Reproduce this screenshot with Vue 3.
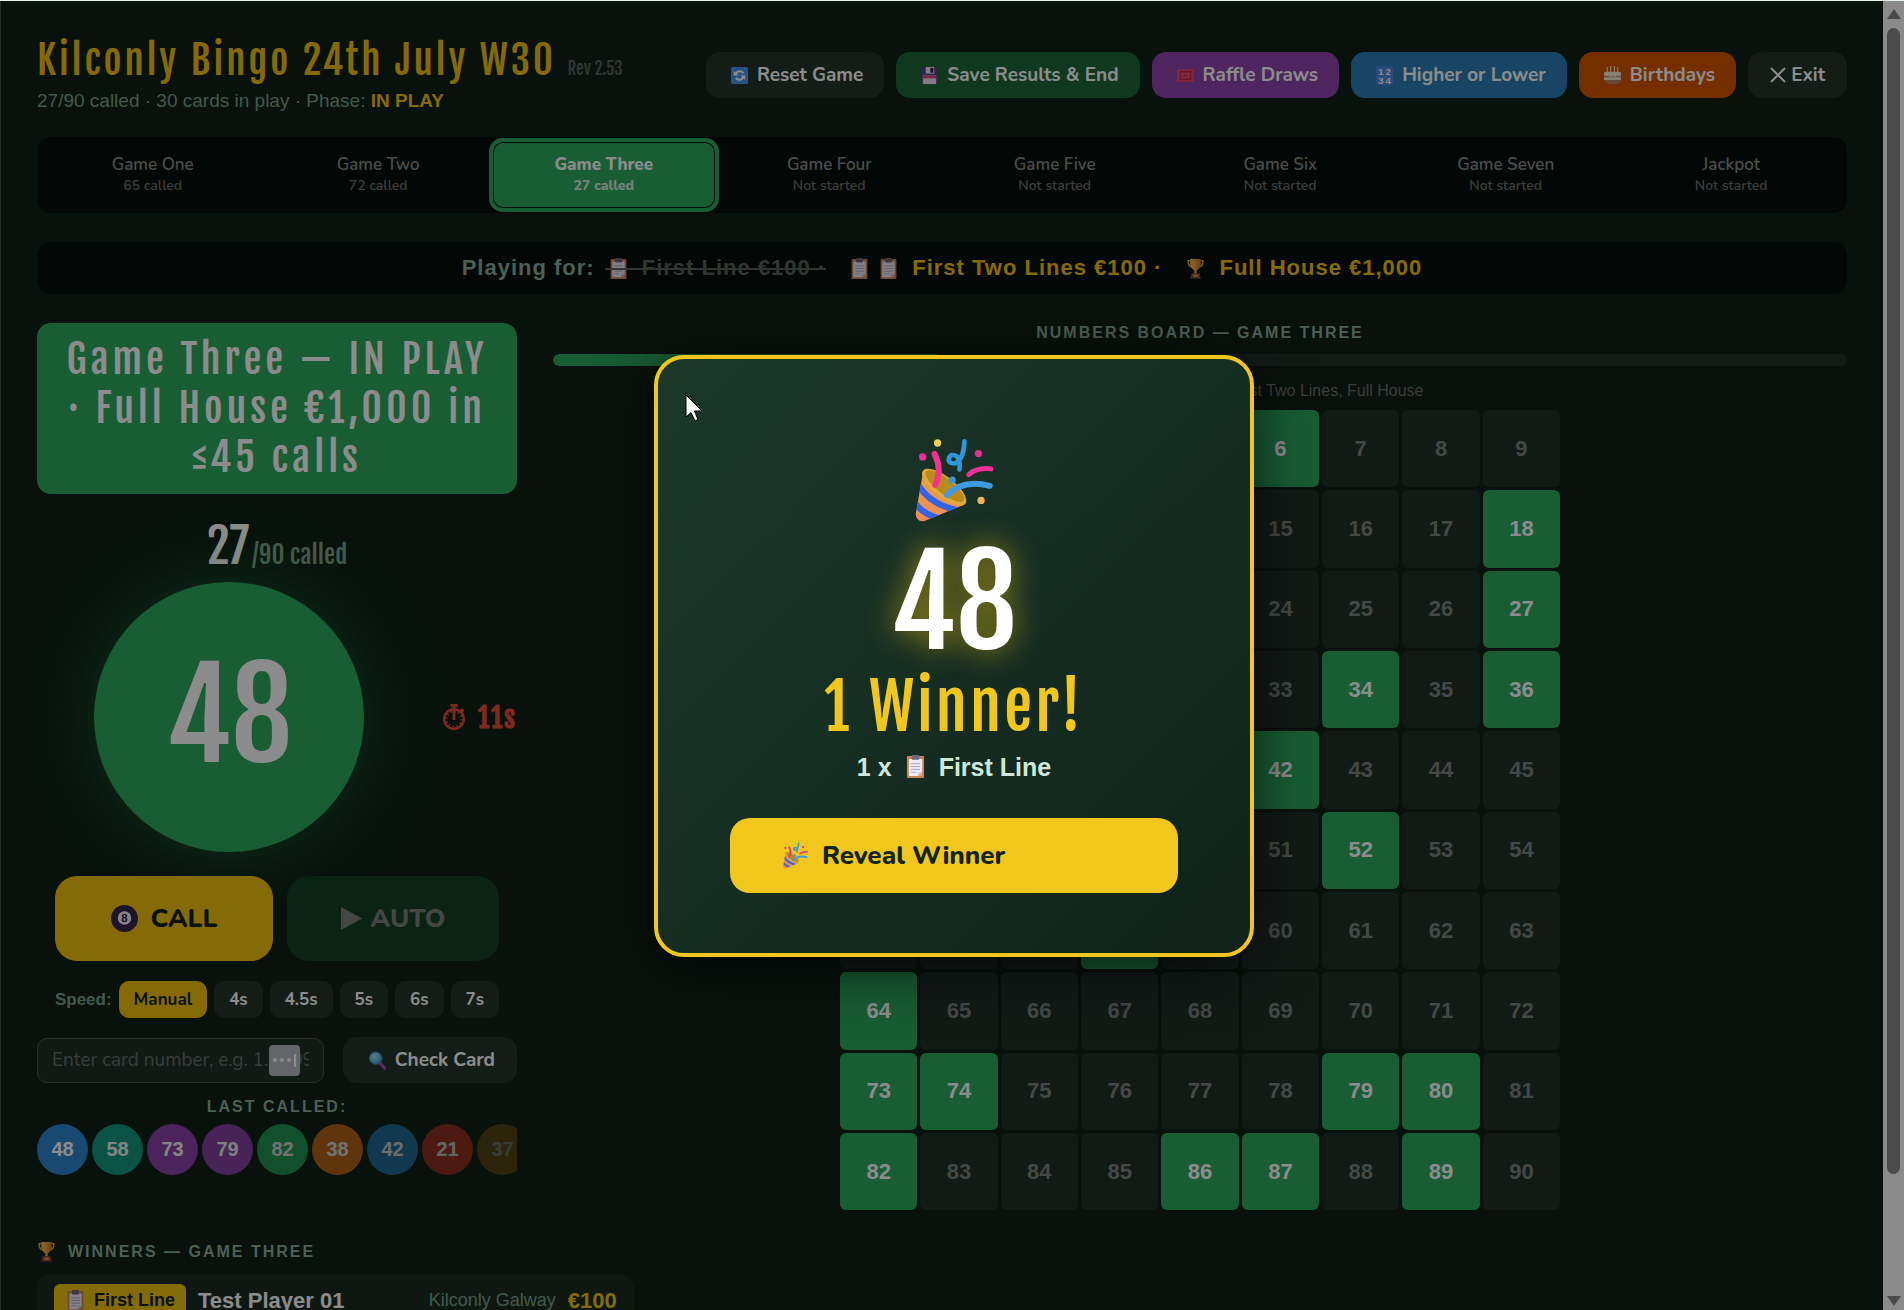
<template>
  <div class="screen">
    <svg class="defs" aria-hidden="true">
      <defs>
        <linearGradient id="cone" x1="0" y1="0" x2="0" y2="1">
          <stop offset="0" stop-color="#dfa43c" />
          <stop offset="1" stop-color="#f08a5d" />
        </linearGradient>
        <linearGradient id="gold" x1="0" y1="0" x2="1" y2="0">
          <stop offset="0" stop-color="#f7c557" />
          <stop offset="1" stop-color="#c97a1a" />
        </linearGradient>
        <radialGradient id="lens" cx="0.4" cy="0.35" r="0.7">
          <stop offset="0" stop-color="#a8e4f7" />
          <stop offset="1" stop-color="#3fa6d4" />
        </radialGradient>
        <clipPath id="coneClip">
          <path d="M94 152 L71 284 Q73 308 98 304 L219 254 Q160 245 94 152Z" />
        </clipPath>
      </defs>
      <symbol id="i-popper" viewBox="66 54 244 256">
        <path d="M94 152 L71 284 Q73 308 98 304 L219 254 Q160 245 94 152Z" fill="url(#cone)" />
        <g clip-path="url(#coneClip)" fill="none" stroke="#3563e8" stroke-width="19">
          <path d="M74 186 Q108 254 200 272" />
          <path d="M62 240 Q88 284 150 298" />
        </g>
        <ellipse cx="157" cy="202" rx="81" ry="31" transform="rotate(38 157 202)" fill="#e5a93a" />
        <ellipse cx="159" cy="199" rx="72" ry="23" transform="rotate(38 159 199)" fill="#b98a1c" />
        <g fill="none" stroke-linecap="round" stroke-linejoin="round">
          <path d="M128 102 Q152 150 130 196" stroke="#f5318f" stroke-width="18" />
          <path d="M166 226 Q212 178 294 198" stroke="#3f9be0" stroke-width="18" />
          <path d="M231 164 Q256 142 298 147" stroke="#ee2f97" stroke-width="15" />
          <path d="M218 64 Q216 116 192 130 Q168 132 171 116 Q178 98 196 110 Q206 124 203 149" stroke="#3097db" stroke-width="14" />
        </g>
        <circle cx="137" cy="69" r="11" fill="#f3cf55" />
        <circle cx="92" cy="111" r="11" fill="#ee2f97" />
        <circle cx="260" cy="101" r="11" fill="#e03290" />
        <circle cx="181" cy="181" r="11" fill="#3f93cf" />
        <circle cx="268" cy="242" r="11" fill="#f2b354" />
      </symbol>
      <symbol id="i-clip" viewBox="0 0 20 24">
        <rect x="1" y="1" width="18" height="23" rx="1" fill="#c98358" />
        <path d="M3 4h14v14l-4 4H3z" fill="#f1eaf6" />
        <path d="M17 17.500v4.500h-5z" fill="#e3a878" />
        <path d="M13 22v-4h4z" fill="#cfc3dc" />
        <rect x="6" y="0" width="8" height="5" rx="1" fill="#6c6679" />
        <path d="M5 9h10M5 12h10M5 15h10M5 18h6" stroke="#a79fb8" />
      </symbol>
      <symbol id="i-trophy" viewBox="0 0 20 24">
        <path d="M4 3H1.500c0 5 1.500 7 5 7M16 3h2.500c0 5-1.500 7-5 7" fill="none" stroke="#e8a93a" stroke-width="1.600" />
        <path d="M4 1h12v5c0 5-3 7-4.500 8v4h-3v-4C7 13 4 11 4 6z" fill="url(#gold)" />
        <path d="M4 23.500l1.500-6h9l1.500 6z" fill="#8a4a4a" />
        <rect x="7.500" y="19" width="5" height="2.500" fill="#e8a93a" />
      </symbol>
      <symbol id="i-reset" viewBox="0 0 20 20">
        <rect x="1" y="1" width="18" height="18" rx="2" fill="#4a95ee" />
        <path d="M6 8.500a4.500 4.500 0 0 1 8-1M14 11.500a4.500 4.500 0 0 1-8 1" fill="none" stroke="#fff" stroke-width="2" />
        <path d="M4 5v5h5zM16 15v-5h-5z" fill="#fff" />
      </symbol>
      <symbol id="i-save" viewBox="0 0 20 20">
        <path d="M1 1h15l3 3v15H1z" fill="#5b3f86" />
        <rect x="6" y="1" width="9" height="7" fill="#e9e3f2" />
        <rect x="11" y="2" width="3" height="5" fill="#2c2340" />
        <rect x="3" y="10" width="14" height="9" fill="#f2dfe9" />
        <rect x="3" y="10" width="14" height="3" fill="#d8477f" />
      </symbol>
      <symbol id="i-ticket" viewBox="0 0 20 20">
        <path d="M1 4.500Q0 4 2 3.500h16q2 .5 1 1.500v2.500q-2 1 0 2v1.500q-2 1 0 2v2q.5 1.500-1 1.500H2q-2 0-1-2z" fill="#f04468" />
        <rect x="4.500" y="6" width="11" height="8" fill="none" stroke="#c02c4c" stroke-width="1.500" />
        <path d="M8 10h4" stroke="#c02c4c" stroke-width="1.500" />
      </symbol>
      <symbol id="i-digits" viewBox="0 0 20 20">
        <rect x="1" y="0" width="18" height="20" rx="2" fill="#4f86e0" />
        <g fill="#fff" font-family="Liberation Sans, sans-serif" font-weight="700" font-size="10">
          <text x="3.500" y="9">1</text><text x="11" y="9">2</text>
          <text x="3.500" y="18.500">3</text><text x="11" y="18.500">4</text>
        </g>
      </symbol>
      <symbol id="i-cake" viewBox="0 0 20 20">
        <path d="M4.500 1v6M8 0v6M12 0v6M15.500 1v6" stroke="#f3e3b0" stroke-width="1.200" />
        <rect x="1" y="6" width="18" height="6" rx="2" fill="#f5ead8" />
        <path d="M1 9q2 3 4.500 1 2.500 3 5 0 2 3 4.500 0 2 2 4-1v3H1z" fill="#c79a72" />
        <rect x="1" y="12" width="18" height="3" fill="#f5ead8" />
        <path d="M2 15h16v3q-8 3-16 0z" fill="#b98463" />
      </symbol>
      <symbol id="i-ball" viewBox="0 0 26 26">
        <circle cx="13" cy="13" r="13" fill="#35234f" />
        <circle cx="13" cy="12.500" r="6.500" fill="#f4f0fa" />
        <text x="13" y="16.500" text-anchor="middle" fill="#241a3a" font-family="Liberation Sans, sans-serif" font-weight="700" font-size="11">8</text>
      </symbol>
      <symbol id="i-lens" viewBox="0 0 20 20">
        <path d="M12 12l5.500 6" stroke="#9b4fb0" stroke-width="3.500" stroke-linecap="round" />
        <circle cx="8" cy="7.500" r="7" fill="#4a8fb5" />
        <circle cx="8" cy="7.500" r="5.800" fill="url(#lens)" />
      </symbol>
      <symbol id="i-watch" viewBox="0 0 24 28">
        <circle cx="12" cy="16" r="9.800" fill="none" stroke="currentColor" stroke-width="2.400" />
        <circle cx="12" cy="16" r="7.600" fill="none" stroke="currentColor" stroke-width="1.800" stroke-dasharray="1.500 2.480" />
        <path d="M12 17V6M8.500 2.500h7M12 2v4M19 6l2.500 2.500" stroke="currentColor" stroke-width="2.800" fill="none" />
      </symbol>
    </svg>

    <main class="page">
      <header class="header">
        <div>
          <h1>Kilconly Bingo 24th July W30 <small>Rev 2.53</small></h1>
          <p class="sub">27/90 called · 30 cards in play · Phase: <strong>IN PLAY</strong></p>
        </div>
        <div class="actions">
          <button v-for="a in actions" :key="a.label" type="button" class="btn" :class="a.kind">
            <svg v-if="a.icon" class="emo"><use :href="'#i-' + a.icon" /></svg>
            <svg v-else class="cross" viewBox="0 0 16 16"><path d="M1 1l14 14M15 1L1 15" /></svg>
            {{ a.label }}
          </button>
        </div>
      </header>

      <nav class="tabs">
        <button v-for="g in games" :key="g.name" type="button" class="tab" :class="{ active: g.active }">
          <span class="tab-name">{{ g.name }}</span>
          <span class="tab-sub">{{ g.note }}</span>
        </button>
      </nav>

      <div class="prizes">
        <span class="prizes-label">Playing for:</span>
        <span class="prize done"><svg class="emo"><use href="#i-clip" /></svg>First Line €100 ·</span>
        <span class="prize">
          <svg class="emo tight"><use href="#i-clip" /></svg><svg class="emo"><use href="#i-clip" /></svg>First Two Lines €100 ·
        </span>
        <span class="prize"><svg class="emo"><use href="#i-trophy" /></svg>Full House €1,000</span>
      </div>

      <div class="columns">
        <section class="caller">
          <div class="banner">Game Three — IN PLAY · Full House €1,000 in ≤45 calls</div>
          <div class="count">27<span>/90 called</span></div>
          <div class="stage">
            <div class="stage-ball"><div class="ball-big">48</div></div>
            <div class="timer"><svg><use href="#i-watch" /></svg>11s</div>
          </div>
          <div class="call-row">
            <button type="button" class="call"><svg><use href="#i-ball" /></svg>CALL</button>
            <button type="button" class="auto" disabled>
              <svg viewBox="0 0 22 24"><path d="M0 0L22 12L0 24Z" fill="currentColor" /></svg>AUTO
            </button>
          </div>
          <div class="speed">
            <span class="speed-label">Speed:</span>
            <button v-for="s in speeds" :key="s" type="button" :class="{ on: s === speed }" @click="speed = s">{{ s }}</button>
          </div>
          <div class="check">
            <div class="field">
              <input v-model="card" type="text" aria-label="Card number" placeholder="Enter card number, e.g. 1.2309">
              <span class="fill-hint"><i></i><i></i><i></i><b></b></span>
            </div>
            <button type="button" class="btn grey"><svg class="emo"><use href="#i-lens" /></svg>Check Card</button>
          </div>
          <h2 class="last-title">LAST CALLED:</h2>
          <div class="last">
            <span v-for="b in last" :key="b.n" class="ball" :style="{ background: b.color, opacity: b.fade }">{{ b.n }}</span>
          </div>
        </section>

        <section class="board">
          <h2>NUMBERS BOARD — GAME THREE</h2>
          <div class="progress"><div class="progress-fill" :style="{ width: percent + '%' }"></div></div>
          <p class="board-note">Prizes still left to be won this game: First Two Lines, Full House</p>
          <div class="grid">
            <div v-for="n in 90" :key="n" class="cell" :class="{ hit: called.includes(n) }">{{ n }}</div>
          </div>
        </section>
      </div>

      <section class="winners">
        <h2><svg class="emo"><use href="#i-trophy" /></svg>WINNERS — GAME THREE</h2>
        <div class="winner-list">
          <div class="winner">
            <span class="badge"><svg class="emo"><use href="#i-clip" /></svg>First Line</span>
            <span class="winner-name">Test Player 01</span>
            <span class="winner-place">Kilconly Galway</span>
            <span class="winner-sum">€100</span>
          </div>
        </div>
      </section>
    </main>

    <div class="scrollbar">
      <svg viewBox="0 0 14 10"><path d="M7 0L14 10H0Z" /></svg>
      <div class="thumb"></div>
      <svg viewBox="0 0 14 10"><path d="M0 0H14L7 10Z" /></svg>
    </div>

    <div class="overlay">
      <div class="modal" role="dialog" aria-label="Winner">
        <svg class="modal-icon"><use href="#i-popper" /></svg>
        <div class="modal-number">48</div>
        <div class="modal-title">1 Winner!</div>
        <div class="modal-sub">1 x <svg class="emo"><use href="#i-clip" /></svg>First Line</div>
        <button type="button" class="reveal"><svg><use href="#i-popper" /></svg>Reveal Winner</button>
      </div>
    </div>

    <svg class="cursor" viewBox="0 0 18 28"><path d="M1 1V23L6 18.500L10 27L13 25.500L9.500 17H17Z" /></svg>
  </div>
</template>

<script setup>
import { ref, computed } from 'vue'

const actions = [
  { label: 'Reset Game', icon: 'reset', kind: 'grey' },
  { label: 'Save Results & End', icon: 'save', kind: 'green' },
  { label: 'Raffle Draws', icon: 'ticket', kind: 'purple' },
  { label: 'Higher or Lower', icon: 'digits', kind: 'blue' },
  { label: 'Birthdays', icon: 'cake', kind: 'orange' },
  { label: 'Exit', icon: '', kind: 'grey exit' }
]

const games = [
  { name: 'Game One', note: '65 called' },
  { name: 'Game Two', note: '72 called' },
  { name: 'Game Three', note: '27 called', active: true },
  { name: 'Game Four', note: 'Not started' },
  { name: 'Game Five', note: 'Not started' },
  { name: 'Game Six', note: 'Not started' },
  { name: 'Game Seven', note: 'Not started' },
  { name: 'Jackpot', note: 'Not started' }
]

const speeds = ['Manual', '4s', '4.5s', '5s', '6s', '7s']
const speed = ref('Manual')
const card = ref('')

const last = [
  { n: 48, color: '#2f86cc', fade: 1 },
  { n: 58, color: '#16a085', fade: 0.95 },
  { n: 73, color: '#8e44ad', fade: 0.95 },
  { n: 79, color: '#8e44ad', fade: 0.9 },
  { n: 82, color: '#27ae60', fade: 0.8 },
  { n: 38, color: '#d9731a', fade: 0.8 },
  { n: 42, color: '#2980b9', fade: 0.75 },
  { n: 21, color: '#c0392b', fade: 0.7 },
  { n: 37, color: '#c98a12', fade: 0.35 }
]

const called = [
  3, 6, 11, 18, 20, 21, 27, 29, 34, 36, 37, 38, 42, 46, 48, 50, 52,
  58, 64, 73, 74, 79, 80, 82, 86, 87, 89
]
const percent = computed(() => called.length / 90 * 100)
</script>

<style>
body {
  margin: 0;
  background: #0f1f16;
}
</style>

<style scoped>
.screen {
  box-sizing: border-box;
  height: 100vh;
  overflow: hidden;
  position: relative;
  display: flex;
  border-top: 1px solid #e8f3ec;
  background: #0f1f16;
  color: #fff;
  font-family: 'Liberation Sans', Arial, sans-serif;
}

.defs {
  position: absolute;
  width: 0;
  height: 0;
}

.page {
  flex: 1;
  min-width: 0;
  padding: 36px 36px 0;
  border-left: 1px solid #4a534e;
}

h1, h2, p {
  margin: 0;
}

h2 {
  font-size: 16px;
  line-height: 20px;
  letter-spacing: 2px;
  color: #8ab09c;
}

button {
  font-family: 'Nunito', 'Open Sans', sans-serif;
  border: 0;
  color: #fff;
  cursor: pointer;
}

.emo {
  width: 19px;
  height: 21px;
  flex: none;
}

.header {
  display: flex;
  justify-content: space-between;
  align-items: center;
}

h1 {
  font-family: 'Fjalla One', 'Roboto Condensed', sans-serif;
  font-weight: 400;
  font-size: 39px;
  line-height: 48px;
  letter-spacing: 3px;
  color: #f1c40f;
}

h1 small {
  font-size: 17px;
  line-height: 20px;
  letter-spacing: 0;
  color: #59625d;
}

.sub {
  margin-top: 4px;
  font-size: 19px;
  line-height: 24px;
  color: #7aa38c;
}

.sub strong {
  color: #f1c40f;
}

.actions {
  display: flex;
  gap: 12px;
}

.btn {
  display: flex;
  align-items: center;
  gap: 8px;
  height: 46px;
  padding: 0 21px 0 24px;
  border-radius: 14px;
  font-size: 19px;
  font-weight: 700;
}

.grey { background: rgba(255, 255, 255, 0.09); }
.green { background: #1d663a; }
.purple { background: #8e44ad; }
.blue { background: #2d7fb9; }
.orange { background: #d35400; }

.exit {
  gap: 5px;
  padding: 0 22px;
}

.cross {
  width: 16px;
  height: 16px;
  fill: none;
  stroke: #fff;
  stroke-width: 2;
}

.tabs {
  display: flex;
  gap: 4px;
  margin-top: 24px;
  padding: 5px;
  border-radius: 14px;
  background: rgba(0, 0, 0, 0.5);
}

.tab {
  flex: 1;
  display: flex;
  flex-direction: column;
  align-items: center;
  justify-content: center;
  height: 66px;
  padding: 0;
  border-radius: 10px;
  background: none;
  font-weight: 600;
  color: #878c89;
}

.tab-name {
  font-size: 17px;
  line-height: 22px;
}

.tab-sub {
  font-size: 14px;
  line-height: 20px;
  opacity: 0.8;
}

.tab.active {
  background: #2da95f;
  color: #fff;
  font-weight: 800;
  box-shadow: 0 0 0 4px #2da95f, inset 0 0 0 1px #06120b;
}

.prizes {
  display: flex;
  align-items: center;
  justify-content: center;
  height: 52px;
  margin-top: 29px;
  border-radius: 14px;
  background: rgba(0, 0, 0, 0.5);
  font-size: 22px;
  font-weight: 700;
  letter-spacing: 1px;
  color: #f1c40f;
}

.prizes-label {
  margin-right: 14px;
  color: #8ab09c;
}

.prize {
  display: flex;
  align-items: center;
  margin-right: 24px;
}

.prize:last-child {
  margin-right: 0;
}

.prize .emo {
  margin-right: 14px;
}

.prize .tight {
  margin-right: 10px;
}

.prize.done {
  position: relative;
  color: #59635d;
}

.prize.done::after {
  content: '';
  position: absolute;
  left: -4px;
  right: 0;
  top: 50%;
  height: 2px;
  background: #59635d;
}

.columns {
  display: flex;
  gap: 36px;
  margin-top: 29px;
}

.caller {
  flex: 0 0 480px;
  min-width: 0;
}

.banner {
  padding: 12px 28px;
  border-radius: 14px;
  background: #2da95f;
  font-family: 'Fjalla One', 'Roboto Condensed', sans-serif;
  font-size: 40px;
  line-height: 49px;
  letter-spacing: 4px;
  text-align: center;
}

.count {
  margin-top: 22px;
  text-align: center;
  font-family: 'Fjalla One', 'Roboto Condensed', sans-serif;
  font-size: 48px;
  line-height: 60px;
}

.count span {
  margin-left: 3px;
  font-size: 25px;
  line-height: 30px;
  color: #7aa38c;
}

.stage {
  display: flex;
  align-items: center;
  gap: 20px;
  margin-top: 6px;
}

.stage-ball {
  flex: 1;
  display: flex;
  justify-content: center;
}

.ball-big {
  width: 270px;
  height: 270px;
  border-radius: 50%;
  background: #2da95f;
  box-shadow: 0 0 72px rgba(39, 174, 96, 0.4);
  font-family: 'Fjalla One', 'Roboto Condensed', sans-serif;
  font-size: 122px;
  line-height: 268px;
  text-align: center;
}

.timer {
  display: flex;
  align-items: center;
  gap: 12px;
  font-family: 'Fjalla One', 'Roboto Condensed', sans-serif;
  font-size: 28px;
  font-weight: 700;
  letter-spacing: 2px;
  color: #e74c3c;
}

.timer svg {
  width: 24px;
  height: 28px;
}

.call-row {
  display: flex;
  justify-content: center;
  gap: 14px;
  margin-top: 24px;
}

.call,
.auto {
  display: flex;
  align-items: center;
  justify-content: center;
  height: 85px;
  border-radius: 22px;
  font-size: 26px;
  font-weight: 800;
}

.call {
  gap: 13px;
  width: 218px;
  background: #f1c40f;
  color: #0f1f16;
}

.call svg {
  width: 27px;
  height: 27px;
}

.auto {
  gap: 9px;
  width: 212px;
  background: #1d663a;
  opacity: 0.45;
}

.auto svg {
  width: 21px;
  height: 23px;
}

.speed {
  display: flex;
  align-items: center;
  justify-content: center;
  gap: 7px;
  margin-top: 20px;
}

.speed-label {
  font-size: 17px;
  font-weight: 700;
  color: #7aa38c;
}

.speed button {
  height: 37px;
  padding: 0 15px;
  border-radius: 10px;
  background: rgba(255, 255, 255, 0.09);
  font-size: 17px;
  font-weight: 700;
}

.speed button.on {
  background: #f1c40f;
  color: #0f1f16;
}

.check {
  display: flex;
  align-items: center;
  gap: 19px;
  margin-top: 19px;
}

.check .btn {
  padding: 0 22px 0 25px;
}

.field {
  position: relative;
  flex: 1;
  min-width: 0;
}

.field input {
  box-sizing: border-box;
  display: block;
  width: 100%;
  height: 45px;
  padding: 0 14px;
  border: 1px solid #4f5953;
  border-radius: 10px;
  background: rgba(255, 255, 255, 0.07);
  color: #fff;
  font-family: 'Nunito', 'Open Sans', sans-serif;
  font-size: 19px;
}

.field input::placeholder {
  color: #69716d;
}

/* autofill marker shown over the end of the field */
.fill-hint {
  position: absolute;
  right: 24px;
  top: 7px;
  display: flex;
  align-items: center;
  justify-content: center;
  gap: 3px;
  width: 31px;
  height: 31px;
  border-radius: 4px;
  background: #b4b8bf;
}

.fill-hint i {
  width: 4px;
  height: 4px;
  border-radius: 50%;
  background: #fff;
}

.fill-hint b {
  width: 2px;
  height: 13px;
  background: #fff;
}

.last-title {
  margin-top: 14px;
  text-align: center;
}

.last {
  display: flex;
  gap: 4px;
  margin-top: 7px;
  overflow: hidden;
}

.ball {
  flex: none;
  width: 51px;
  height: 51px;
  border-radius: 50%;
  font-size: 20px;
  font-weight: 700;
  line-height: 51px;
  text-align: center;
}

.board {
  flex: 1;
  min-width: 0;
  text-align: center;
}

.progress {
  height: 12px;
  margin-top: 11px;
  border-radius: 6px;
  background: rgba(255, 255, 255, 0.08);
  overflow: hidden;
}

.progress-fill {
  height: 100%;
  border-radius: 6px;
  background: #2da95f;
}

.board-note {
  margin: 15px 0 9px;
  font-size: 16px;
  line-height: 20px;
  color: #6b746f;
}

.grid {
  display: grid;
  grid-template-columns: repeat(9, 1fr);
  gap: 3px;
  max-width: 720px;
  margin: 0 auto;
}

.cell {
  display: flex;
  align-items: center;
  justify-content: center;
  aspect-ratio: 1;
  border-radius: 6px;
  background: rgba(255, 255, 255, 0.08);
  font-size: 22px;
  font-weight: 700;
  color: #7d8480;
}

.cell.hit {
  background: #2da95f;
  color: #fff;
}

.winners {
  margin-top: 31px;
}

.winners h2 {
  display: flex;
  align-items: center;
  gap: 12px;
}

.winner-list {
  display: grid;
  grid-template-columns: repeat(3, 1fr);
  gap: 10px;
  margin-top: 13px;
}

.winner {
  display: flex;
  align-items: center;
  gap: 12px;
  padding: 9px 17px;
  border-radius: 12px;
  background: rgba(255, 255, 255, 0.05);
}

.badge {
  display: flex;
  align-items: center;
  gap: 9px;
  height: 33px;
  padding: 0 11px 0 12px;
  border-radius: 6px;
  background: #f1c40f;
  color: #0f1f16;
  font-size: 18px;
  font-weight: 700;
}

.winner-name {
  font-size: 22px;
  font-weight: 700;
}

.winner-place {
  margin-left: auto;
  font-size: 18px;
  color: #7aa38c;
}

.winner-sum {
  font-size: 22px;
  font-weight: 700;
  color: #f1c40f;
}

.scrollbar {
  display: flex;
  flex-direction: column;
  align-items: center;
  gap: 9px;
  flex: none;
  width: 21px;
  padding: 8px 0 4px;
  box-sizing: border-box;
  background: #fcfcfc;
}

.scrollbar svg {
  flex: none;
  width: 14px;
  height: 10px;
  fill: #858585;
}

.thumb {
  width: 13px;
  height: calc(88% + 5px);
  margin-bottom: auto;
  border-radius: 7px;
  background: #898989;
}

.overlay {
  position: absolute;
  inset: 0;
  display: flex;
  align-items: center;
  justify-content: center;
  padding-left: 4px;
  background: rgba(0, 0, 0, 0.45);
}

.modal {
  box-sizing: border-box;
  display: flex;
  flex-direction: column;
  align-items: center;
  width: 600px;
  max-width: 90%;
  padding: 79px 72px 60px;
  border: 4px solid #f1c71d;
  border-radius: 30px;
  background: linear-gradient(135deg, #1c382b, #10221a);
  box-shadow: 0 10px 60px rgba(0, 0, 0, 0.7);
}

.modal-icon {
  width: 81px;
  height: 85px;
}

.modal-number {
  margin-top: 16px;
  font-family: 'Fjalla One', 'Roboto Condensed', sans-serif;
  font-size: 122px;
  line-height: 128px;
  text-shadow: 0 0 30px rgba(241, 196, 15, 0.6);
}

.modal-title {
  margin-top: 8px;
  font-family: 'Fjalla One', 'Roboto Condensed', sans-serif;
  font-size: 63px;
  line-height: 64px;
  letter-spacing: 3px;
  color: #f1c71d;
}

.modal-sub {
  display: flex;
  align-items: center;
  gap: 14px;
  margin-top: 13px;
  font-size: 25px;
  font-weight: 700;
  line-height: 30px;
  color: #cfe8d9;
}

.modal-sub .emo {
  height: 25px;
}

.reveal {
  display: flex;
  align-items: center;
  gap: 13px;
  align-self: stretch;
  height: 75px;
  margin-top: 36px;
  padding: 0 52px;
  border-radius: 20px;
  background: #f1c71d;
  color: #13241a;
  font-size: 26px;
  font-weight: 800;
}

.reveal svg {
  width: 27px;
  height: 27px;
}

.cursor {
  position: absolute;
  left: 36%;
  top: 30%;
  width: 18px;
  height: 28px;
  fill: #fff;
  stroke: #000;
}
</style>
